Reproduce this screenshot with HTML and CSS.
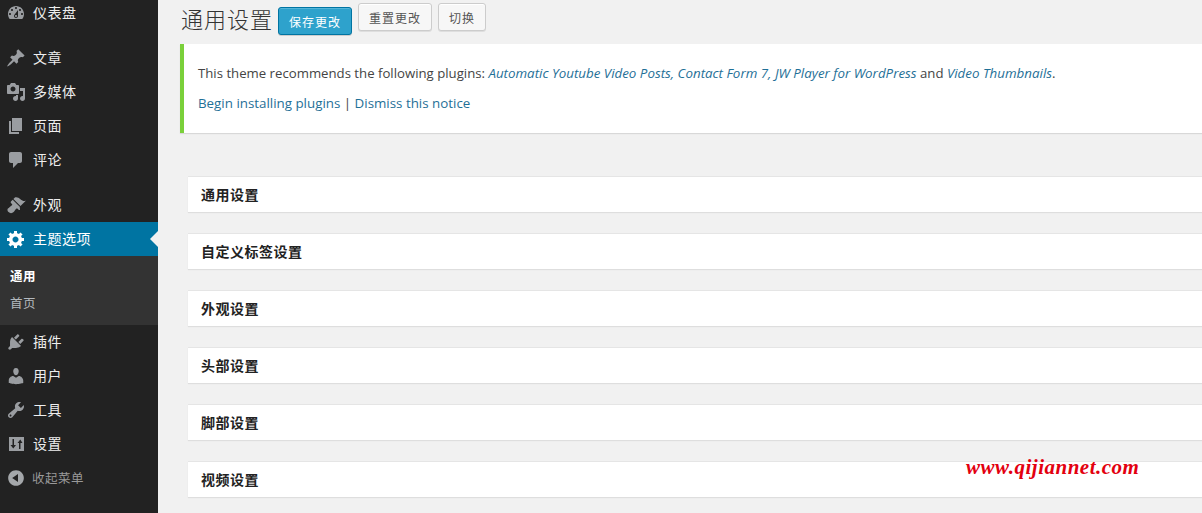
FILE: index.html
```html
<!DOCTYPE html>
<html lang="zh-CN">
<head>
<meta charset="utf-8">
<title>通用设置</title>
<link rel="stylesheet" href="styles.css">
</head>
<body>
<div class="page">
  <nav class="sidebar">
    <ul class="menu">
      <li class="item"><svg class="icon" viewBox="0 0 20 20"><path d="M3.76 16h12.48c1.1-1.37 1.76-3.11 1.76-5 0-4.42-3.58-8-8-8s-8 3.58-8 8c0 1.89.66 3.63 1.76 5zM10 4c.55 0 1 .45 1 1s-.45 1-1 1-1-.45-1-1 .45-1 1-1zM6 6c.55 0 1 .45 1 1s-.45 1-1 1-1-.45-1-1 .45-1 1-1zm8 0c.55 0 1 .45 1 1s-.45 1-1 1-1-.45-1-1 .45-1 1-1zm-5.37 5.55L12 7v6c0 1.1-.9 2-2 2s-2-.9-2-2c0-.57.24-1.08.63-1.45zM4 10c.55 0 1 .45 1 1s-.45 1-1 1-1-.45-1-1 .45-1 1-1zm12 0c.55 0 1 .45 1 1s-.45 1-1 1-1-.45-1-1 .45-1 1-1zm-5 3c0-.55-.45-1-1-1s-1 .45-1 1 .45 1 1 1 1-.45 1-1z"/></svg>仪表盘</li>
      <li class="item sep"><svg class="icon" viewBox="0 0 20 20"><path d="M10.44 3.02l1.82-1.82 6.36 6.35-1.83 1.82c-1.05-.68-2.48-.57-3.41.36l-.75.75c-.92.93-1.04 2.35-.35 3.41l-1.83 1.82-2.41-2.41-2.8 2.79c-.42.42-3.38 2.71-3.8 2.29s1.86-3.39 2.28-3.81l2.79-2.79L4.1 9.36l1.83-1.82c1.05.69 2.48.57 3.4-.36l.75-.75c.93-.92 1.05-2.35.36-3.41z"/></svg>文章</li>
      <li class="item"><svg class="icon" viewBox="0 0 20 20"><path d="M13 11V4c0-.55-.45-1-1-1h-1.67L9 1H5L3.67 3H2c-.55 0-1 .45-1 1v7c0 .55.45 1 1 1h10c.55 0 1-.45 1-1zM7 4.5c1.38 0 2.5 1.12 2.5 2.5S8.38 9.5 7 9.5 4.5 8.38 4.5 7 5.62 4.5 7 4.5zM14 6h5v10.5c0 1.38-1.12 2.5-2.5 2.5S14 17.88 14 16.5s1.12-2.5 2.5-2.5c.17 0 .34.02.5.05V9h-3V6zm-4 8.05V13h2v3.5c0 1.38-1.12 2.5-2.5 2.5S7 17.88 7 16.5 8.12 14 9.5 14c.17 0 .34.02.5.05z"/></svg>多媒体</li>
      <li class="item"><svg class="icon" viewBox="0 0 20 20"><path d="M6 15V2h10v13H6zm-1 1h8v2H3V5h2v11z"/></svg>页面</li>
      <li class="item"><svg class="icon" viewBox="0 0 20 20"><path d="M5 2h9c1.1 0 2 .9 2 2v7c0 1.1-.9 2-2 2h-2l-5 5v-5H5c-1.1 0-2-.9-2-2V4c0-1.1.9-2 2-2z"/></svg>评论</li>
      <li class="item sep"><svg class="icon" viewBox="0 0 20 20"><path d="M14.48 11.06L7.41 3.99l1.5-1.5c.5-.56 2.3-.47 3.51.32 1.21.8 1.43 1.28 2.91 2.1 1.18.64 2.45 1.26 4.45.85zm-.71.71L6.7 4.7 4.93 6.47c-.39.39-.39 1.02 0 1.41l1.06 1.06c.39.39.39 1.03 0 1.42-.6.6-1.43 1.11-2.21 1.69-.35.26-.7.53-1.01.84C1.43 13.23.78 15.22 2.53 17c1.75 1.77 3.79 1.23 5.1 0 .31-.31.58-.66.85-1.02.57-.78 1.08-1.61 1.69-2.21.39-.39 1.02-.39 1.41 0l1.06 1.06c.39.39 1.02.39 1.41 0z"/></svg>外观</li>
      <li class="item active"><svg class="icon" viewBox="0 0 20 20"><path d="M18 12h-2.18c-.17.7-.44 1.35-.81 1.93l1.54 1.54-2.1 2.1-1.54-1.54c-.58.36-1.23.63-1.91.79V19H8v-2.18c-.68-.16-1.33-.43-1.91-.79l-1.54 1.54-2.12-2.12 1.54-1.54c-.36-.58-.63-1.23-.79-1.91H1V9.03h2.17c.16-.7.44-1.35.8-1.94L2.43 5.55l2.1-2.1 1.54 1.54c.58-.37 1.24-.64 1.93-.81V2h3v2.18c.68.16 1.33.43 1.91.79l1.54-1.54 2.12 2.12-1.54 1.54c.36.59.64 1.24.8 1.94H18V12zm-8.5 1.5c1.66 0 3-1.34 3-3s-1.34-3-3-3-3 1.34-3 3 1.34 3 3 3z"/></svg>主题选项</li>
      <li class="submenu">
        <div class="subitem current">通用</div>
        <div class="subitem">首页</div>
      </li>
      <li class="item"><svg class="icon" viewBox="0 0 20 20"><path d="M13.11 4.36L9.87 7.6 8 5.73l3.24-3.24c.35-.34 1.05-.2 1.56.32.52.51.66 1.21.31 1.55zm-8 1.77l.91-1.12 9.01 9.01-1.19.84c-.71.71-2.63 1.16-3.82 1.16H6.14L4.9 17.26c-.59.59-1.54.59-2.12 0-.59-.58-.59-1.53 0-2.12l1.24-1.24v-3.88c0-1.13.4-3.19 1.09-3.89zm7.26 3.97l3.24-3.24c.34-.35 1.04-.21 1.55.31.52.51.66 1.21.31 1.55l-3.24 3.25z"/></svg>插件</li>
      <li class="item"><svg class="icon" viewBox="0 0 20 20"><path d="M10 9.25c-2.27 0-2.73-3.44-2.73-3.44C7 4.02 7.82 2 9.97 2c2.16 0 2.98 2.02 2.71 3.81 0 0-.41 3.44-2.68 3.44zm0 2.57L12.72 10c2.39 0 4.52 2.33 4.52 4.53v2.49s-3.65 1.13-7.24 1.13c-3.65 0-7.24-1.13-7.24-1.13v-2.49c0-2.25 1.94-4.48 4.47-4.48z"/></svg>用户</li>
      <li class="item"><svg class="icon" viewBox="0 0 20 20"><path d="M16.68 9.77c-1.34 1.34-3.3 1.67-4.95.99l-5.41 6.52c-.99.99-2.59.99-3.58 0s-.99-2.59 0-3.57l6.52-5.42c-.68-1.65-.35-3.61.99-4.95 1.28-1.28 3.12-1.62 4.72-1.06l-2.89 2.89 2.82 2.82 2.86-2.87c.53 1.58.18 3.39-1.08 4.65zM3.81 16.21c.4.39 1.04.39 1.43 0 .4-.4.4-1.04 0-1.43-.39-.4-1.03-.4-1.43 0-.39.39-.39 1.03 0 1.43z"/></svg>工具</li>
      <li class="item"><svg class="icon" viewBox="0 0 20 20"><path fill-rule="evenodd" d="M3 3h15v14H3z M6.5 5h1.500v6h2l-2.750 3.500L4.500 11h2z M13 15h1.500V9h2l-2.250-3.500L11.500 9h1.500z"/></svg>设置</li>
      <li class="item collapse"><svg class="icon" viewBox="0 0 20 20"><path d="M10 2.16c4.33 0 7.84 3.51 7.84 7.84s-3.51 7.84-7.84 7.84S2.16 14.33 2.16 10 5.71 2.16 10 2.16zm2 11.72V6.12L6.18 9.97z"/></svg>收起菜单</li>
    </ul>
  </nav>
  <main class="content">
    <header class="titlebar">
      <h1 class="title">通用设置</h1>
      <button class="btn primary">保存更改</button>
      <button class="btn">重置更改</button>
      <button class="btn">切换</button>
    </header>
    <section class="notice">
      <p class="notice-line">This theme recommends the following plugins: <a class="plugin">Automatic Youtube Video Posts</a><a class="plugin">, Contact Form 7</a><a class="plugin">, JW Player for WordPress</a> and <a class="plugin">Video Thumbnails</a>.</p>
      <p class="notice-line actions"><a>Begin installing plugins</a> | <a>Dismiss this notice</a></p>
    </section>
    <section class="panels">
      <div class="panel">通用设置</div>
      <div class="panel">自定义标签设置</div>
      <div class="panel">外观设置</div>
      <div class="panel">头部设置</div>
      <div class="panel">脚部设置</div>
      <div class="panel">视频设置</div>
    </section>
    <div class="watermark">www.qijiannet.com</div>
  </main>
</div>
</body>
</html>
```
FILE: styles.css
```css
* { box-sizing: border-box; }
html, body { margin: 0; padding: 0; height: 513px; overflow: hidden; }
body {
  background: #f1f1f1;
  font-family: "Open Sans", "Noto Sans CJK SC", sans-serif;
  font-size: 13px;
  color: #444;
}
.page { display: flex; height: 513px; }

.sidebar { width: 158px; flex: none; background: #222; overflow: hidden; }
.menu { list-style: none; margin: -4px 0 0; padding: 0; }
.item {
  display: flex;
  align-items: center;
  gap: 7px;
  height: 34px;
  padding: 0 0 2px 6px;
  font-family: "Noto Sans CJK SC", sans-serif;
  font-size: 14px;
  letter-spacing: .5px;
  color: #eee;
  position: relative;
}
.item.sep { margin-top: 11px; }
.icon { width: 20px; height: 20px; flex: none; fill: #9a9da1; margin-top: 2px; }
.item.active { background: #0074a2; color: #fff; }
.item.active .icon { fill: #fff; }
.item.active::after {
  content: "";
  position: absolute;
  right: 0;
  top: 9px;
  border: 8px solid transparent;
  border-right-color: #f1f1f1;
  border-left-width: 0;
}
.submenu { height: 69px; background: #333; padding-top: 6px; }
.subitem {
  height: 27px;
  line-height: 27px;
  padding-left: 10px;
  font-family: "Noto Sans CJK SC", sans-serif;
  font-size: 12.5px;
  letter-spacing: .5px;
  color: #b4b9be;
}
.subitem.current { color: #fff; font-weight: 700; }
.item.collapse { color: #999; font-size: 12.5px; gap: 6px; }
.item.collapse .icon { fill: #a4a7aa; }

.content { flex: 1; min-width: 0; position: relative; padding-left: 22px; }
.titlebar { display: flex; align-items: flex-start; height: 44px; padding-top: 3px; }
.title {
  margin: 0 5px 0 1px;
  font-family: "Noto Sans CJK SC", sans-serif;
  font-size: 22px;
  font-weight: 300;
  letter-spacing: 1px;
  line-height: 30px;
  color: #333;
}
.btn {
  height: 28px;
  width: 74px;
  margin-right: 6px;
  padding: 0;
  border: 1px solid #ccc;
  border-radius: 3px;
  background: #f7f7f7;
  box-shadow: inset 0 1px 0 #fff, 0 1px 0 rgba(0,0,0,.08);
  font-family: "Noto Sans CJK SC", sans-serif;
  font-size: 12px;
  letter-spacing: 1px;
  color: #555;
}
.btn:last-child { width: 48px; }
.btn.primary {
  margin-top: 4px;
  background: #2ea2cc;
  border-color: #0074a2;
  box-shadow: inset 0 1px 0 rgba(120,200,230,.5), 0 1px 0 rgba(0,0,0,.15);
  color: #fff;
}
.notice {
  height: 89px;
  background: #fff;
  border-left: 4px solid #7ad03a;
  box-shadow: 0 1px 1px rgba(0,0,0,.1);
  padding: 20px 0 0 14px;
}
.notice-line { margin: 0 0 12px; line-height: 18px; font-size: 13.2px; white-space: nowrap; }
.notice-line a { color: #1f7097; }
.plugin { font-style: italic; font-size: 13.35px; }
.actions { font-size: 13.35px; }
.panels { display: flex; flex-direction: column; gap: 21px; margin: 43px 0 0 8px; }
.panel {
  height: 36px;
  line-height: 34px;
  padding-left: 13px;
  background: #fff;
  border-top: 1px solid #e5e5e5;
  box-shadow: 0 1px 1px rgba(0,0,0,.08);
  font-family: "Noto Sans CJK SC", sans-serif;
  font-size: 14px;
  font-weight: 700;
  letter-spacing: .5px;
  color: #222;
}
.watermark {
  position: absolute;
  left: 808px;
  top: 455px;
  font-family: "Liberation Serif", serif;
  font-size: 21px;
  font-weight: 700;
  font-style: italic;
  letter-spacing: .5px;
  line-height: 24px;
  color: #e3000f;
}
```
